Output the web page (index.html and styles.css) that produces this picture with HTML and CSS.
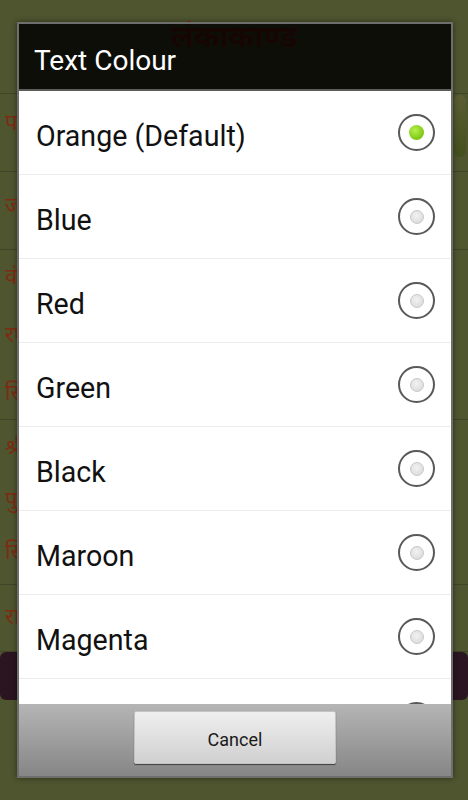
FILE: index.html
```html
<!DOCTYPE html>
<html lang="en">
<head>
  <meta charset="UTF-8" />
  <meta name="viewport" content="width=device-width, initial-scale=1.0">
  <title>Text Colour</title>
  <link rel="stylesheet" href="styles.css">
</head>
<body>

  <div class="page">
    <header class="page-head">
      <h1>लंकाकाण्ड</h1>
    </header>

    <div class="verse v1">
      <p>पवन</p>
    </div>
    <div class="verse v2">
      <p>जय</p>
    </div>
    <div class="verse v3">
      <p>वंदौं</p>
      <p>रघु</p>
      <p>सिंधु</p>
    </div>
    <div class="verse v4">
      <p>श्री</p>
      <p>पुनि</p>
      <p>सिंधु</p>
    </div>
    <div class="verse v5">
      <p>राम</p>
    </div>

    <div class="menu-bar"></div>
    <div class="scroll-thumb"></div>
  </div>

  <div class="dialog">
    <div class="dialog-title">Text Colour</div>

    <ul class="options">
      <li class="option selected"><span class="label">Orange (Default)</span><span class="radio"></span></li>
      <li class="option"><span class="label">Blue</span><span class="radio"></span></li>
      <li class="option"><span class="label">Red</span><span class="radio"></span></li>
      <li class="option"><span class="label">Green</span><span class="radio"></span></li>
      <li class="option"><span class="label">Black</span><span class="radio"></span></li>
      <li class="option"><span class="label">Maroon</span><span class="radio"></span></li>
      <li class="option"><span class="label">Magenta</span><span class="radio"></span></li>
      <li class="option"><span class="label"></span><span class="radio"></span></li>
    </ul>

    <div class="dialog-foot">
      <button class="cancel-btn">Cancel</button>
    </div>
  </div>

</body>
</html>
```

FILE: styles.css
```css
* {
  margin: 0;
  padding: 0;
  box-sizing: border-box;
}

html, body {
  width: 100%;
  height: 800px;
  overflow: hidden;
  font-family: Roboto, 'Noto Sans', sans-serif;
  background: #4f552f;
}

/* page behind the dialog (dimmed) */
.page {
  position: relative;
  height: 800px;
  background: #4f552f;
}

.page-head {
  height: 94px;
  border-bottom: 1px solid #3f4426;
  display: flex;
  justify-content: center;
  padding-top: 20px;
}

.page-head h1 {
  font-family: 'Noto Sans Devanagari', 'Noto Sans', sans-serif;
  font-size: 31px;
  line-height: 40px;
  font-weight: bold;
  color: #92170e;
}

.verse {
  border-bottom: 1px solid #3f4426;
  padding-left: 5px;
  font-family: 'Noto Sans Devanagari', 'Noto Sans', sans-serif;
  font-size: 22px;
  color: #7e2c12;
  white-space: nowrap;
}

.verse p {
  width: 13px;
  overflow: hidden;
}

.v1 { height: 78px; padding-top: 14px; line-height: 34px; }
.v2 { height: 78px; padding-top: 19px; line-height: 34px; }
.v3 { height: 170px; line-height: 58px; }
.v4 { height: 165px; padding-top: 4px; line-height: 52px; }
.v5 { height: 67px; line-height: 67px; }

.menu-bar {
  height: 48px;
  background: #2a1521;
  border-radius: 6px;
}

.scroll-thumb {
  position: absolute;
  top: 95px;
  right: 2px;
  width: 12px;
  height: 62px;
  border-radius: 6px;
  background: linear-gradient(#5b5d33, #44501e);
}

/* dialog */
.dialog {
  position: absolute;
  top: 22px;
  left: 17px;
  width: 436px;
  height: 756px;
  border: 2px solid #6e6e6e;
  display: flex;
  flex-direction: column;
  box-shadow: 0 0 6px rgba(0,0,0,0.45);
}

.dialog-title {
  height: 67px;
  padding: 9px 0 0 15px;
  line-height: 56px;
  font-size: 28px;
  color: #fff;
  background: rgba(4,4,2,0.88);
  border-bottom: 2px solid #5c5c5c;
}

.options {
  list-style: none;
  height: 614px;
  overflow: hidden;
  background: #fff;
}

.option {
  height: 84px;
  display: flex;
  align-items: center;
  justify-content: space-between;
  padding: 0 16px 0 17px;
  border-bottom: 1px solid #ececec;
  font-size: 28.6px;
  color: #111;
}

.option .label {
  padding-top: 6px;
}

.radio {
  width: 37px;
  height: 37px;
  border: 2px solid #595959;
  border-radius: 50%;
  display: flex;
  align-items: center;
  justify-content: center;
}

.radio::after {
  content: '';
  width: 12px;
  height: 12px;
  border-radius: 50%;
  background: radial-gradient(circle at 45% 40%, #f2f2f2, #d6d6d6);
  border: 1px solid #c8c8c8;
}

.option.selected .radio::after {
  width: 15px;
  height: 15px;
  border: none;
  background: radial-gradient(circle at 40% 35%, #b8f04c, #7cc614 70%);
}

.dialog-foot {
  height: 72px;
  padding-top: 7px;
  display: flex;
  justify-content: center;
  align-items: flex-start;
  background: linear-gradient(#b5b5b5, #868686);
}

.cancel-btn {
  width: 202px;
  height: 53px;
  padding-top: 3px;
  font-family: Roboto, sans-serif;
  font-size: 18px;
  color: #1a1a1a;
  background: linear-gradient(#efefef, #d0d0d0);
  border: 1px solid #c4c4c4;
  border-radius: 2px;
  box-shadow: 0 1px 1px rgba(0,0,0,0.55);
}
```
